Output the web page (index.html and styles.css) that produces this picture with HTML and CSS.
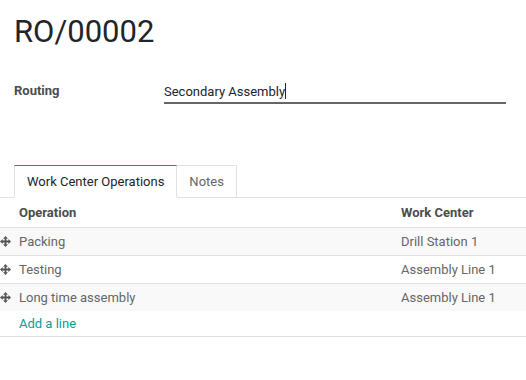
FILE: index.html
```html
<!DOCTYPE html>
<html lang="en">

<head>
  <meta charset="UTF-8">
  <title>RO/00002</title>
  <link rel="stylesheet" href="styles.css">
</head>

<body>

  <div class="sheet">
    <h1 class="title">RO/00002</h1>

    <div class="field">
      <label class="field-label" for="routing">Routing</label>
      <div class="field-input">
        <span id="routing">Secondary Assembly</span><span class="caret"></span>
      </div>
    </div>

    <ul class="tabs">
      <li class="tab active">Work Center Operations</li>
      <li class="tab">Notes</li>
    </ul>

    <table class="lines">
      <thead>
        <tr>
          <th class="handle"></th>
          <th class="col-op">Operation</th>
          <th class="col-wc">Work Center</th>
        </tr>
      </thead>
      <tbody>
        <tr class="odd">
          <td class="handle"><svg class="grip" viewBox="0 0 10 10"><path d="M5 0 L7.2 2.4 L5.8 2.4 L5.8 4.2 L7.6 4.2 L7.6 2.8 L10 5 L7.6 7.2 L7.6 5.8 L5.8 5.8 L5.8 7.6 L7.2 7.6 L5 10 L2.8 7.6 L4.2 7.6 L4.2 5.8 L2.4 5.8 L2.4 7.2 L0 5 L2.4 2.8 L2.4 4.2 L4.2 4.2 L4.2 2.4 L2.8 2.4 Z"/></svg></td>
          <td>Packing</td>
          <td>Drill Station 1</td>
        </tr>
        <tr>
          <td class="handle"><svg class="grip" viewBox="0 0 10 10"><path d="M5 0 L7.2 2.4 L5.8 2.4 L5.8 4.2 L7.6 4.2 L7.6 2.8 L10 5 L7.6 7.2 L7.6 5.8 L5.8 5.8 L5.8 7.6 L7.2 7.6 L5 10 L2.8 7.6 L4.2 7.6 L4.2 5.8 L2.4 5.8 L2.4 7.2 L0 5 L2.4 2.8 L2.4 4.2 L4.2 4.2 L4.2 2.4 L2.8 2.4 Z"/></svg></td>
          <td>Testing</td>
          <td>Assembly Line 1</td>
        </tr>
        <tr class="odd last">
          <td class="handle"><svg class="grip" viewBox="0 0 10 10"><path d="M5 0 L7.2 2.4 L5.8 2.4 L5.8 4.2 L7.6 4.2 L7.6 2.8 L10 5 L7.6 7.2 L7.6 5.8 L5.8 5.8 L5.8 7.6 L7.2 7.6 L5 10 L2.8 7.6 L4.2 7.6 L4.2 5.8 L2.4 5.8 L2.4 7.2 L0 5 L2.4 2.8 L2.4 4.2 L4.2 4.2 L4.2 2.4 L2.8 2.4 Z"/></svg></td>
          <td>Long time assembly</td>
          <td>Assembly Line 1</td>
        </tr>
        <tr class="add-row">
          <td class="handle"></td>
          <td colspan="2"><a href="#" class="add-line">Add a line</a></td>
        </tr>
      </tbody>
    </table>
  </div>

</body>

</html>
```

FILE: styles.css
```css
body {
  margin: 0;
  font-family: Roboto, "Noto Sans", sans-serif;
  font-size: 13px;
  color: #4c4c4c;
  background: #fff;
}

.title {
  margin: 0;
  padding: 12px 14px 0;
  font-size: 31px;
  font-weight: 400;
  line-height: 40px;
  color: #212529;
}

.field {
  display: flex;
  align-items: flex-start;
  margin-top: 28px;
  padding-left: 14px;
}

.field-label {
  width: 150px;
  padding-top: 1px;
  font-weight: 700;
  line-height: 20px;
  color: #4c4c4c;
}

.field-input {
  width: 342px;
  line-height: 20px;
  padding-top: 2px;
  border-bottom: 2px solid #666;
  color: #212529;
}

.caret {
  display: inline-block;
  width: 1px;
  height: 16px;
  vertical-align: -3px;
  background: #212529;
}

.tabs {
  display: flex;
  margin: 61px 0 0;
  padding: 0 0 0 14px;
  list-style: none;
  border-bottom: 1px solid #dee2e6;
}

.tab {
  margin-bottom: -1px;
  padding: 0 12px;
  line-height: 31px;
  border: 1px solid #dee2e6;
  color: #666;
}

.tab + .tab {
  border-left: none;
}

.tab.active {
  border-top-color: #875a7b;
  border-bottom-color: #fff;
  color: #212529;
}

.lines {
  width: 100%;
  border-collapse: collapse;
  color: #666;
}

.lines th,
.lines td {
  padding: 0 4px;
  text-align: left;
  height: 27px;
}

.lines th {
  height: 29px;
  font-weight: 700;
  color: #4c4c4c;
  border-bottom: 1px solid #dee2e6;
}

.lines td {
  border-top: 1px solid #dee2e6;
}

.lines thead tr {
  box-shadow: 0 3px 4px -2px rgba(0, 0, 0, 0.08);
}

.lines .odd td {
  background: #f9f9f9;
}

.lines .add-row td {
  height: 25px;
  border-top: none;
  border-bottom: 1px solid #dee2e6;
}

.lines .handle {
  width: 15px;
  padding: 0;
}

.lines .col-wc {
  width: 121px;
}

.grip {
  display: block;
  width: 11px;
  height: 11px;
  margin-top: -1px;
  fill: #555;
}

.add-line {
  color: #00a09d;
  text-decoration: none;
}
```
